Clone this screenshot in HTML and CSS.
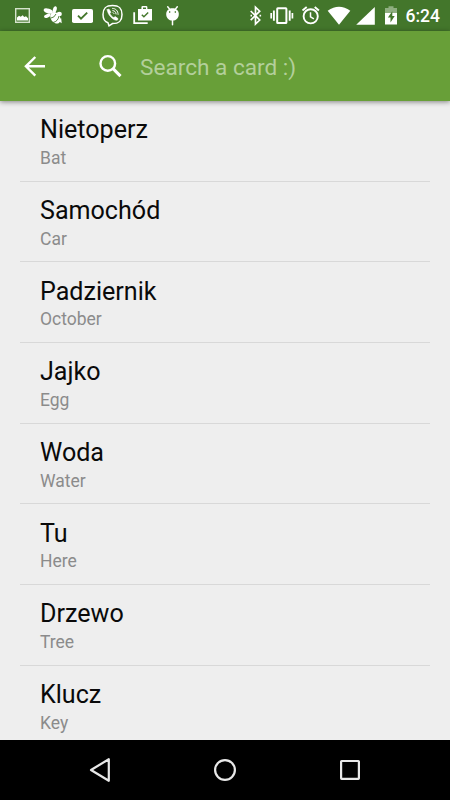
FILE: index.html
```
<!DOCTYPE html>
<html lang="pl">
<head>
<meta charset="utf-8">
<title>Cards</title>
<link rel="stylesheet" href="styles.css">
</head>
<body>
<div class="screen">
  <header class="status">
    <div class="status-icons">
      <svg width="26" height="31" viewBox="10 0 26 31"><rect x="15.7" y="8.7" width="13.6" height="13.6" fill="none" stroke="#d5e3cc" stroke-width="1.4"/><path fill="#fff" d="M17 20.5v-3l2-1.7 1.7 1 2-1.6 1.5 1.8 1.8-.7 2 2v2.2z"/></svg>
      <svg width="32" height="31" viewBox="36 0 32 31" fill="#fff"><ellipse cx="48.3" cy="11" rx="4.8" ry="2.4" transform="rotate(18 48.3 11)"/><ellipse cx="54.8" cy="9.5" rx="1.9" ry="3.3" transform="rotate(15 54.8 9.5)"/><ellipse cx="47.3" cy="15.8" rx="3.4" ry="1.8" transform="rotate(-22 47.3 15.8)"/><ellipse cx="59.3" cy="14" rx="2.6" ry="2.2"/><ellipse cx="55.4" cy="17.8" rx="4.6" ry="6.2" transform="rotate(-35 55.4 17.8)"/><path d="M57 20l4.700 3.200-.5-5z"/><path d="M50.500 18.200q4-.5 5.500-4.200M53 22.500q5-1 6-6.500" stroke="#43762b" stroke-width=".9" fill="none"/></svg>
      <svg width="30" height="31" viewBox="68 0 30 31"><rect x="72" y="9" width="21" height="14" rx="1.8" fill="#fff"/><path d="M78 15.6l3 3 6.2-6" fill="none" stroke="#43762b" stroke-width="1.9"/></svg>
      <svg width="30" height="31" viewBox="98 0 30 31" fill="none" stroke="#fff" stroke-width="1.5" stroke-linecap="round"><path d="M108 22.8c-3.8-1-5-3.8-5-8.2 0-6.4 2.5-9 9.5-9s9.5 2.6 9.5 9-2.5 9-9.5 9l-3.5 2.3z"/><path d="M107.2 9.8l1.7-.8 2 3.2-1 1.3c.8 2 2.2 3.4 4 4.1l1.3-1 2.8 2-.5 1.5c-3.9 1-9.8-5-10.3-10.3z" fill="#fff" stroke-width=".6"/><path d="M112.6 8.4c3.2.1 5.5 2.4 5.5 6M112.8 10.6c2 .1 3.2 1.4 3.3 3.4M113 12.6l1 1" stroke-width="1"/></svg>
      <svg width="30" height="31" viewBox="128 0 30 31"><path d="M134.2 12.2v11h13.5" fill="none" stroke="#fff" stroke-width="1.8"/><path d="M138 9h3.4V7.2q0-1.2 1.2-1.2h3.6q1.2 0 1.2 1.2V9H152v11.5h-14zM143 9h3V7.5h-3z" fill="#fff" fill-rule="evenodd"/><path d="M141.8 14.7l2.1 2.1 4.3-4.2" fill="none" stroke="#43762b" stroke-width="1.4"/></svg>
      <svg width="30" height="31" viewBox="158 0 30 31"><path d="M167.7 6.8l2.1 2.6M177.3 6.8l-2.1 2.6M172.5 18v6.8" stroke="#fff" stroke-width="1.5" stroke-linecap="round"/><path d="M166.2 14c0-7.8 12.6-7.8 12.6 0 0 4-2.5 6.6-6.3 6.6s-6.3-2.6-6.3-6.6z" fill="#fff"/><path d="M169 12h1.3M174.7 12h1.3" stroke="#43762b" stroke-width="1.3"/></svg>
    </div>
    <div class="status-icons">
      <svg width="20" height="31" viewBox="246 0 20 31"><path d="M250.7 11l9 9-4.2 4V7.2l4.2 4-9 9" fill="none" stroke="#fff" stroke-width="1.7"/><path d="M250.5 15.6h1.5M259.5 15.6h1.6" stroke="#fff" stroke-width="1.7"/></svg>
      <svg width="32" height="31" viewBox="266 0 32 31" fill="none" stroke="#fff"><rect x="277.2" y="8.3" width="9.2" height="14.8" rx=".6" stroke-width="2"/><path d="M273.9 10.5v10.3M289.7 10.5v10.3" stroke-width="1.9"/><path d="M271.2 13v5.5M292.4 13v5.5" stroke-width="1.7"/></svg>
      <svg width="26" height="31" viewBox="298 0 26 31" fill="none" stroke="#fff"><circle cx="310.7" cy="16.3" r="7.1" stroke-width="1.9"/><path d="M302.5 10.5l4.2-3.5M318.9 10.5l-4.2-3.5" stroke-width="1.9"/><path d="M310.5 12.2v4.7l3.4 2" stroke-width="1.5"/></svg>
      <svg width="29" height="31" viewBox="324 0 29 31"><path d="M327.7 10.7q11.3-7.7 22.6 0L339 24.7z" fill="#fff"/></svg>
      <svg width="27" height="31" viewBox="353 0 27 31"><path d="M374.8 7v17.8H356.2z" fill="#fff"/></svg>
      <svg width="22" height="31" viewBox="380 0 22 31"><path d="M385 13V8h3.5V6.3h5V8h3.5v5z" fill="#8fae80"/><path d="M385 13h12v11.5h-12z" fill="#fff"/><path d="M392.3 11.3l-4.4 6.2h2.6v5l4.2-6.4h-2.4z" fill="#43762b"/></svg>
      <span class="clock">6:24</span>
    </div>
  </header>
  <div class="toolbar">
    <svg width="24" height="24" viewBox="0 0 24 24" fill="none" stroke="#fff" stroke-width="2.4"><path d="M22 12.3H3M12.3 3L2.9 12.3l9.4 9.4"/></svg>
    <svg class="search-icon" width="26" height="26" viewBox="0 0 26 26" fill="none" stroke="#fff"><circle cx="9.8" cy="10.4" r="7.3" stroke-width="2.4"/><path d="M14.8 15.4l7.7 7.7" stroke-width="3"/></svg>
    <span class="hint">Search a card :)</span>
  </div>
  <main class="list">
    <div class="row"><div class="word">Nietoperz</div><div class="meaning">Bat</div></div>
    <div class="row"><div class="word">Samochód</div><div class="meaning">Car</div></div>
    <div class="row"><div class="word">Padziernik</div><div class="meaning">October</div></div>
    <div class="row"><div class="word">Jajko</div><div class="meaning">Egg</div></div>
    <div class="row"><div class="word">Woda</div><div class="meaning">Water</div></div>
    <div class="row"><div class="word">Tu</div><div class="meaning">Here</div></div>
    <div class="row"><div class="word">Drzewo</div><div class="meaning">Tree</div></div>
    <div class="row"><div class="word">Klucz</div><div class="meaning">Key</div></div>
  </main>
  <nav class="navbar">
    <svg width="24" height="26" viewBox="0 0 24 26"><path d="M20.8 2.2v21.6L3 13z" fill="none" stroke="#e8e8e8" stroke-width="2.2" stroke-linejoin="round"/></svg>
    <svg width="24" height="24" viewBox="0 0 24 24"><circle cx="12" cy="12" r="9.9" fill="none" stroke="#e8e8e8" stroke-width="2.2"/></svg>
    <svg width="24" height="24" viewBox="0 0 24 24"><rect x="3.1" y="3" width="17.8" height="17.8" rx=".5" fill="none" stroke="#e8e8e8" stroke-width="2.2"/></svg>
  </nav>
</div>
</body>
</html>
```
FILE: styles.css
```
* { box-sizing: border-box; }
body { margin: 0; font-family: Roboto, "Liberation Sans", sans-serif; }
svg { display: block; flex: none; }
.screen {
  width: 450px;
  height: 800px;
  display: flex;
  flex-direction: column;
  overflow: hidden;
  background: #eee;
}
.status {
  flex: none;
  height: 31px;
  display: flex;
  justify-content: space-between;
  padding: 0 10px;
  background: #43762b;
}
.status-icons { display: flex; align-items: center; }
.clock {
  width: 38px;
  padding-left: 3.5px;
  font-size: 17.5px;
  font-weight: 500;
  line-height: 32px;
  color: #fff;
  white-space: nowrap;
}
.toolbar {
  flex: none;
  height: 70px;
  display: flex;
  align-items: center;
  padding: 0 23px;
  background: #689f38;
  box-shadow: 0 1px 5px rgba(0, 0, 0, .45);
  z-index: 1;
}
.search-icon { margin-left: 51px; }
.hint {
  margin-left: 16px;
  padding-top: 2px;
  font-size: 22.6px;
  color: #b3cf9b;
}
.list {
  flex: 1;
  min-height: 0;
  overflow: hidden;
  padding: 0 20px;
}
.row {
  height: 80.7px;
  padding: 12.2px 20px 0;
  border-bottom: 1px solid #d8d8d8;
}
.word { font-size: 25.1px; line-height: 34px; color: #0a0a0a; }
.meaning { margin-top: -.3px; font-size: 17.5px; line-height: 22px; color: #8b8b8b; }
.navbar {
  flex: none;
  height: 60px;
  display: flex;
  justify-content: space-between;
  align-items: center;
  padding: 0 88px;
  background: #000;
}
```
